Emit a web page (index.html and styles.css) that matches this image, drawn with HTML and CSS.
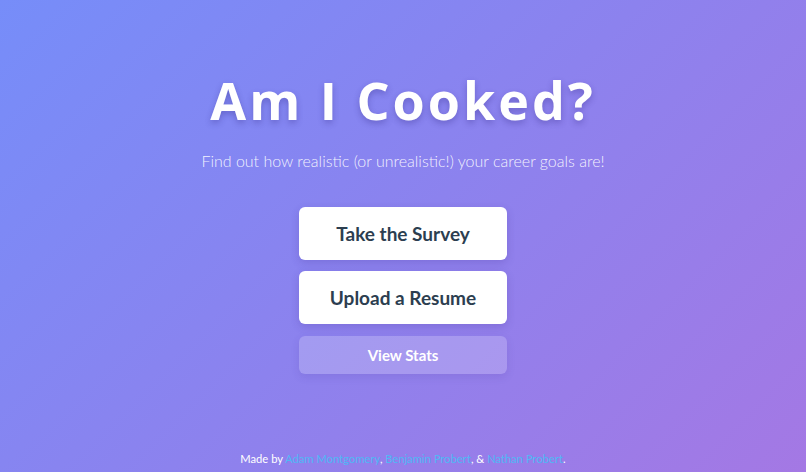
FILE: index.html
```html
<!DOCTYPE html>
<html lang="en">
<head>
  <meta charset="UTF-8">
  <meta name="viewport" content="width=device-width, initial-scale=1.0">
  <title>Am I Cooked?</title>
  <link rel="stylesheet" href="styles.css">
</head>
<body>
  <main class="hero">
    <h1 class="title">Am I Cooked?</h1>
    <p class="subtitle">Find out how realistic (or unrealistic!) your career goals are!</p>

    <div class="actions">
      <a class="btn btn-main" href="#">Take the Survey</a>
      <a class="btn btn-main" href="#">Upload a Resume</a>
      <a class="btn btn-ghost" href="#">View Stats</a>
    </div>
  </main>

  <footer class="credits">
    Made by <a href="#">Adam Montgomery</a>, <a href="#">Benjamin Probert</a>, &amp; <a href="#">Nathan Probert</a>.
  </footer>
</body>
</html>
```

FILE: styles.css
```css
html, body {
  height: 100%;
}

body {
  margin: 0;
  display: flex;
  flex-direction: column;
  background: linear-gradient(135deg, #768df9 0%, #8c82ee 50%, #a478e4 100%);
  font-family: "Open Sans", "Noto Sans", sans-serif;
  color: #fff;
  overflow: hidden;
}

.hero {
  flex: 1;
  display: flex;
  flex-direction: column;
  align-items: center;
  padding-top: 64px;
}

.title {
  margin: 0;
  font-size: 52px;
  font-weight: 700;
  letter-spacing: 3px;
  line-height: 72px;
  text-shadow: 0 3px 6px rgba(40, 30, 120, 0.3);
}

.subtitle {
  margin: 15px 0 0;
  font-family: "Lato", "Open Sans", sans-serif;
  font-size: 16px;
  font-weight: 300;
  color: rgba(255, 255, 255, 0.9);
}

.actions {
  display: flex;
  flex-direction: column;
  gap: 11px;
  margin-top: 37px;
  width: 208px;
}

.btn {
  display: flex;
  align-items: center;
  justify-content: center;
  border-radius: 6px;
  text-decoration: none;
  font-family: "Lato", "Open Sans", sans-serif;
  font-weight: 700;
}

.btn-main {
  height: 53px;
  background: #fff;
  color: #2c3e50;
  font-size: 19px;
  box-shadow: 0 3px 8px rgba(60, 40, 140, 0.2);
}

.btn-ghost {
  height: 38px;
  margin-top: 1px;
  background: rgba(255, 255, 255, 0.2);
  color: #fff;
  font-size: 15px;
  box-shadow: 0 3px 8px rgba(60, 40, 140, 0.12);
}

.credits {
  text-align: center;
  font-family: "Lato", "Open Sans", sans-serif;
  font-size: 11.2px;
  padding-bottom: 7px;
  color: #fff;
}

.credits a {
  color: #4fb8f5;
  text-decoration: none;
}
```
